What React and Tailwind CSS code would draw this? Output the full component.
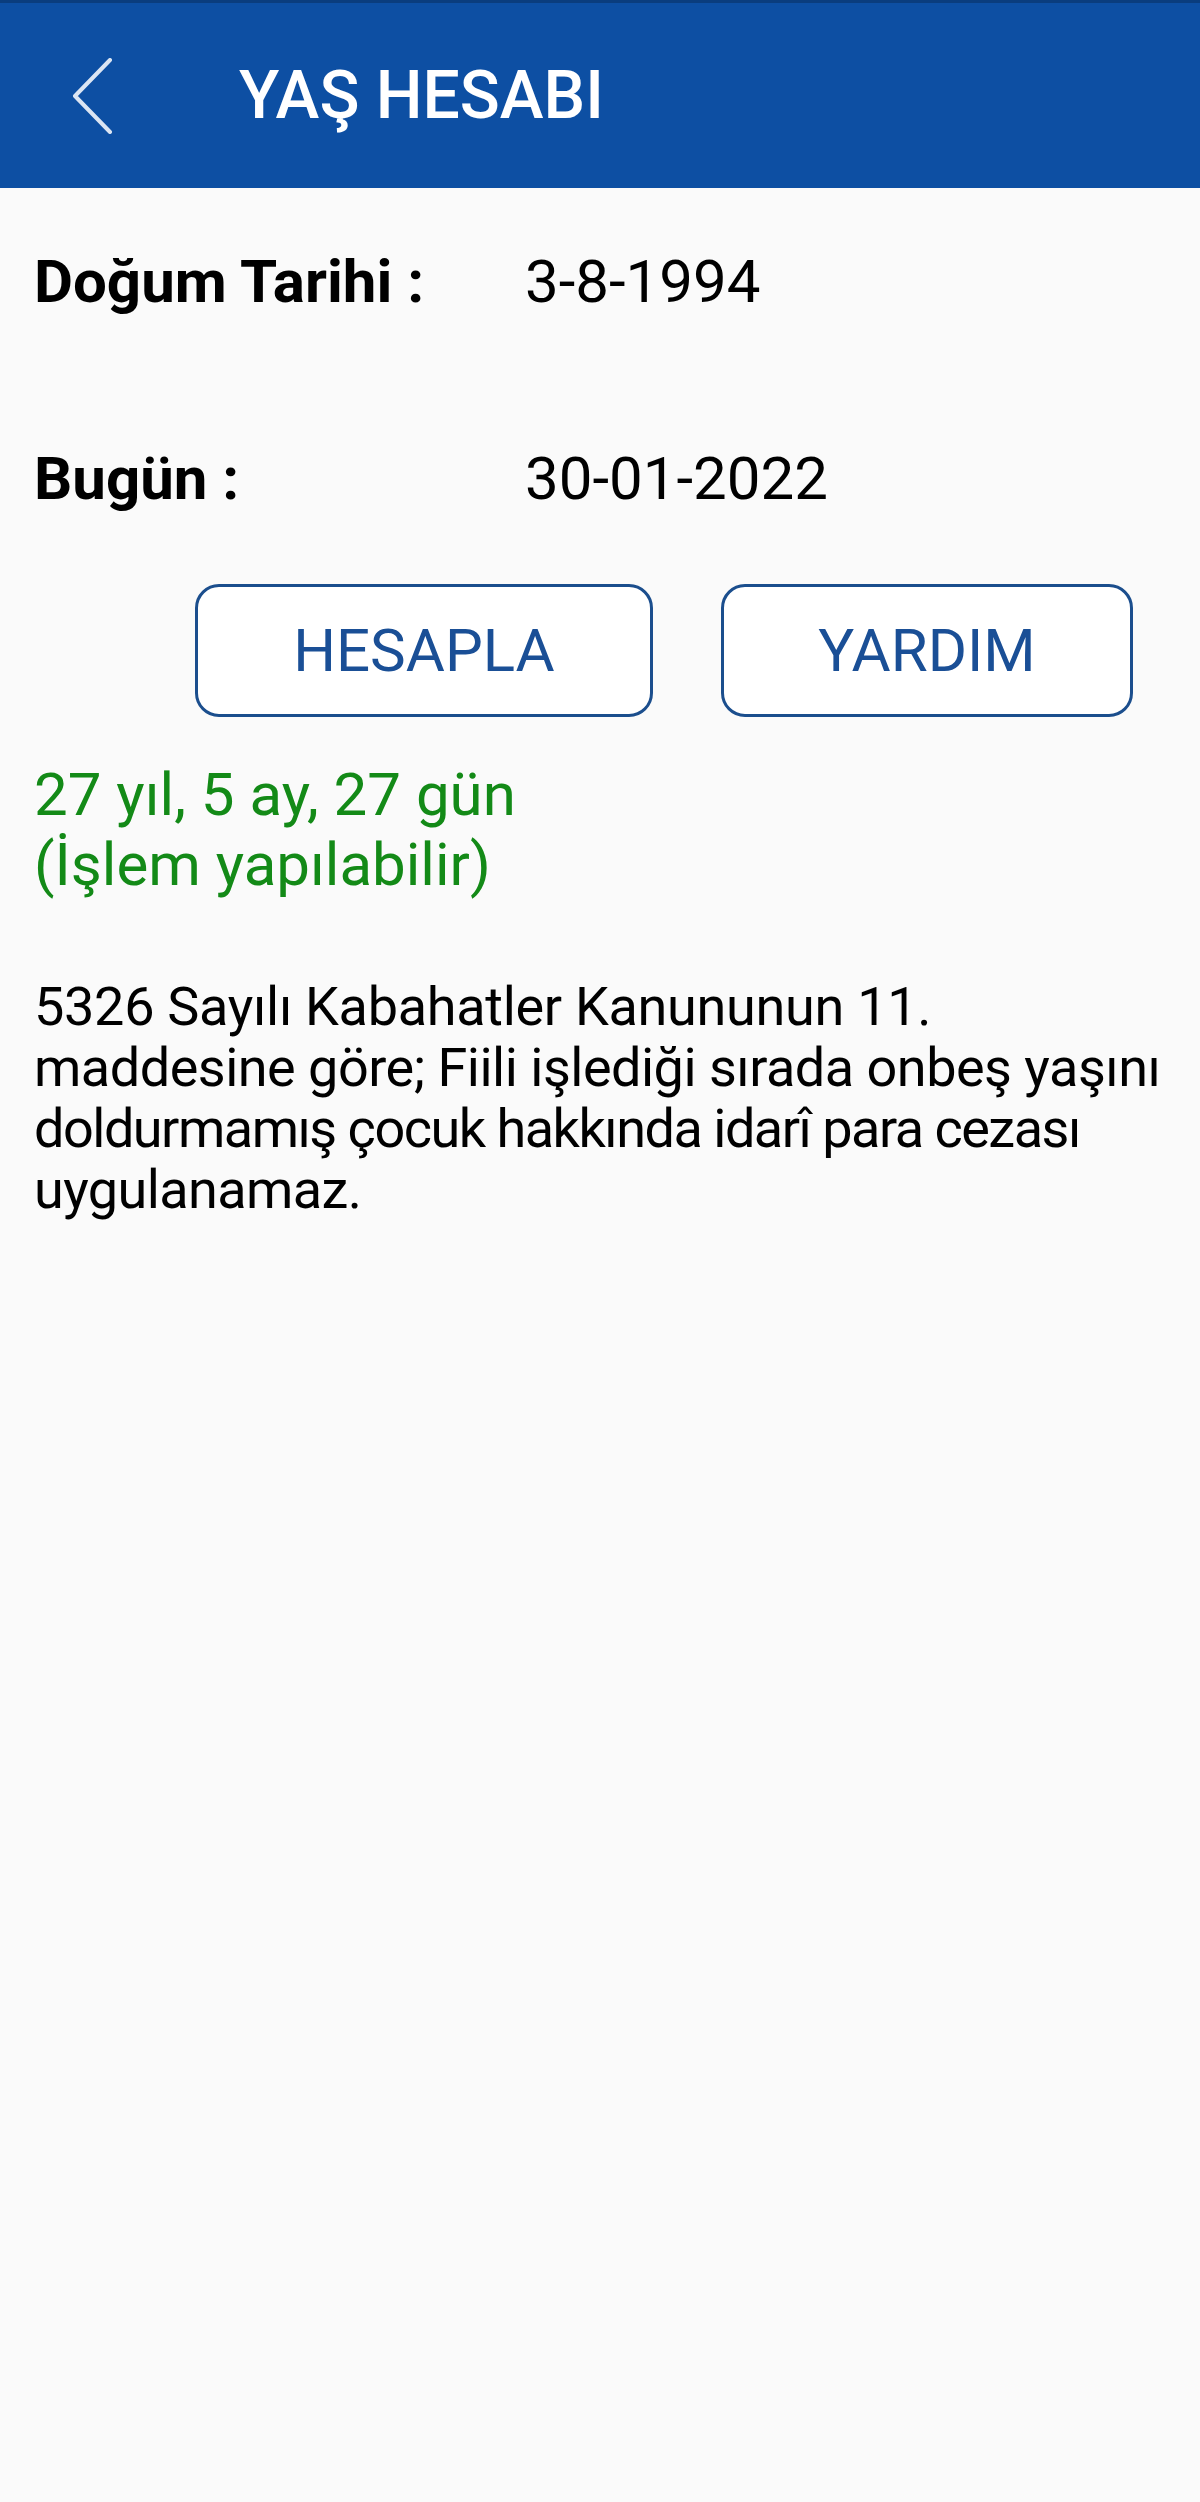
export default function App() {
  const font = { fontFamily: 'Roboto, "Noto Sans", sans-serif' };
  return (
    <div className="min-h-[2502px] w-[1200px] bg-[#fafafa]" style={font}>
      <header className="flex h-[188px] items-center border-t-[3px] border-[#0a3d7e] bg-[#0d4fa3]">
        <div className="ml-[70px] flex h-[80px] w-[44px] items-center">
          <svg width="44" height="76" viewBox="0 0 44 76" fill="none">
            <path d="M40 2 L5 38 L40 74" stroke="#dbe5f3" strokeWidth="4" strokeLinecap="round" strokeLinejoin="round" />
          </svg>
        </div>
        <h1 className="ml-[125px] text-[66px] font-medium leading-none text-white">YAŞ HESABI</h1>
      </header>
      <main className="pl-[34px] pr-[6px]">
        <div className="mt-[59px] flex text-[60px] leading-[70px] text-black">
          <span className="w-[491px] font-bold">Doğum Tarihi :</span>
          <span>3-8-1994</span>
        </div>
        <div className="mt-[127px] flex text-[60px] leading-[70px] text-black">
          <span className="w-[491px] font-bold">Bugün :</span>
          <span>30-01-2022</span>
        </div>
        <div className="ml-[161px] mt-[70px] flex gap-[68px]">
          <button className="flex h-[133px] w-[458px] items-center justify-center rounded-[24px] border-[3px] border-[#1b4e8d] bg-white text-[60px] text-[#1a4f96]">HESAPLA</button>
          <button className="flex h-[133px] w-[412px] items-center justify-center rounded-[24px] border-[3px] border-[#1b4e8d] bg-white text-[60px] text-[#1a4f96]">YARDIM</button>
        </div>
        <div className="mt-[43px] text-[60px] leading-[70px] text-[#138a17]">
          <div>27 yıl, 5 ay, 27 gün</div>
          <div>(İşlem yapılabilir)</div>
        </div>
        <div className="mt-[76px] whitespace-nowrap text-[54px] leading-[61px] text-black">
          <div className="tracking-[-0.3px]">5326 Sayılı Kabahatler Kanununun 11.</div>
          <div className="tracking-[-0.5px]">maddesine göre; Fiili işlediği sırada onbeş yaşını</div>
          <div className="tracking-[-1.5px]">doldurmamış çocuk hakkında idarî para cezası</div>
          <div className="tracking-[-0.6px]">uygulanamaz.</div>
        </div>
      </main>
    </div>
  );
}
